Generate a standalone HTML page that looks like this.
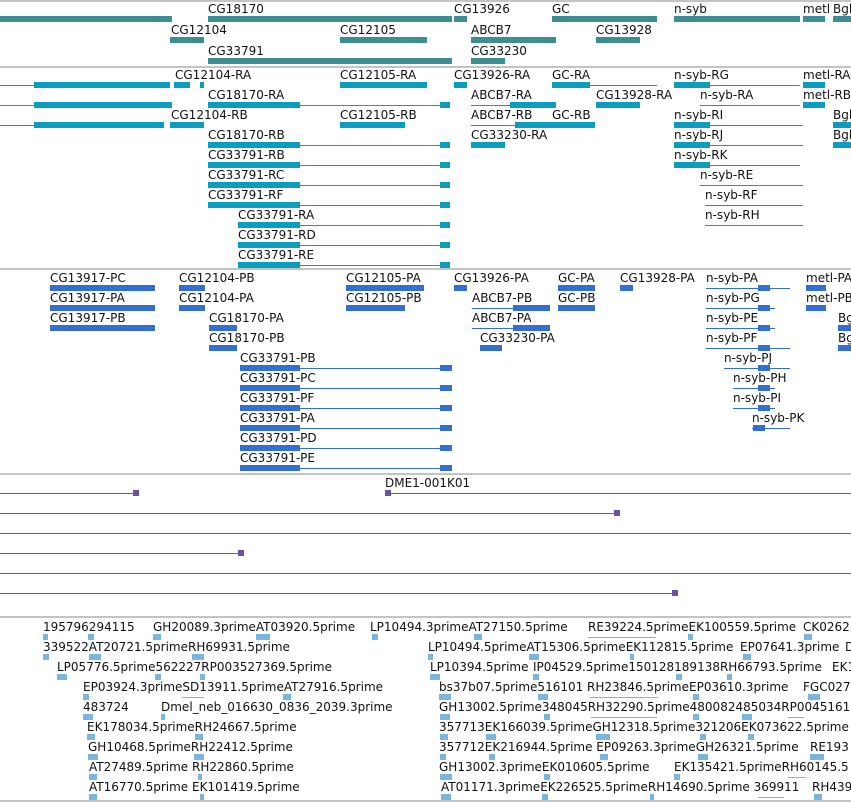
<!DOCTYPE html>
<html><head><meta charset="utf-8"><style>
body{margin:0;width:851px;height:802px;background:#fff;position:relative;overflow:hidden;font-family:"DejaVu Sans","Liberation Sans",sans-serif;font-size:12px;color:#111}
div{position:absolute}
.s{left:0;width:851px;height:2px;background:#c4c4c4}
.t{white-space:nowrap;line-height:14px}
.a{background:#3d8e93;height:6px}
.b{background:#0b9dbf;height:6px}
.bl{background:#0b9dbf;height:1px}
.c{background:#336fd2;height:6px}
.cl{background:#336fd2;height:1px}
.p{background:#6e4fa6;height:1px}
.pb{background:#6e4fa6;height:6px;width:6px}
.e{background:#7ab4e0;height:6px}
.el{background:#7ab4e0;height:1px}
</style></head><body>
<div class="s" style="top:0"></div>
<div class="s" style="top:66px"></div>
<div class="s" style="top:268px"></div>
<div class="s" style="top:473px"></div>
<div class="s" style="top:616px"></div>
<div class="s" style="top:800px"></div>

<!-- track1 -->
<div class="t" style="left:208px;top:2px">CG18170</div>
<div class="t" style="left:454px;top:2px">CG13926</div>
<div class="t" style="left:552px;top:2px">GC</div>
<div class="t" style="left:674px;top:2px">n-syb</div>
<div class="t" style="left:803px;top:2px">metl</div>
<div class="t" style="left:833px;top:2px">Bgb</div>
<div class="a" style="left:0;top:16px;width:172px"></div>
<div class="a" style="left:208px;top:16px;width:244px"></div>
<div class="a" style="left:454px;top:16px;width:13px"></div>
<div class="a" style="left:552px;top:16px;width:105px"></div>
<div class="a" style="left:674px;top:16px;width:126px"></div>
<div class="a" style="left:803px;top:16px;width:22px"></div>
<div class="a" style="left:833px;top:16px;width:18px"></div>
<div class="t" style="left:171px;top:23px">CG12104</div>
<div class="t" style="left:340px;top:23px">CG12105</div>
<div class="t" style="left:471px;top:23px">ABCB7</div>
<div class="t" style="left:596px;top:23px">CG13928</div>
<div class="a" style="left:170px;top:37px;width:34px"></div>
<div class="a" style="left:340px;top:37px;width:87px"></div>
<div class="a" style="left:420px;top:37px;width:7px"></div>
<div class="a" style="left:471px;top:37px;width:85px"></div>
<div class="a" style="left:596px;top:37px;width:44px"></div>
<div class="t" style="left:208px;top:44px">CG33791</div>
<div class="t" style="left:471px;top:44px">CG33230</div>
<div class="a" style="left:208px;top:58px;width:244px"></div>
<div class="a" style="left:471px;top:58px;width:34px"></div>

<!-- track2 -->
<div class="bl" style="left:0;top:85px;width:34px"></div>
<div class="b" style="left:34px;top:82px;width:136px"></div>
<div class="b" style="left:174px;top:82px;width:16px"></div>
<div class="b" style="left:200px;top:82px;width:4px"></div>
<div class="t" style="left:175px;top:68px">CG12104-RA</div>
<div class="t" style="left:340px;top:68px">CG12105-RA</div>
<div class="b" style="left:340px;top:82px;width:87px"></div>
<div class="t" style="left:454px;top:68px">CG13926-RA</div>
<div class="b" style="left:454px;top:82px;width:13px"></div>
<div class="t" style="left:552px;top:68px">GC-RA</div>
<div class="b" style="left:552px;top:82px;width:38px"></div>
<div class="bl" style="left:590px;top:85px;width:67px"></div>
<div class="t" style="left:674px;top:68px">n-syb-RG</div>
<div class="b" style="left:674px;top:82px;width:36px"></div>
<div class="bl" style="left:710px;top:85px;width:90px"></div>
<div class="t" style="left:803px;top:68px">metl-RA</div>
<div class="b" style="left:803px;top:82px;width:22px"></div>

<div class="bl" style="left:0;top:105px;width:34px"></div>
<div class="b" style="left:34px;top:102px;width:138px"></div>
<div class="t" style="left:208px;top:88px">CG18170-RA</div>
<div class="b" style="left:208px;top:102px;width:92px"></div>
<div class="bl" style="left:300px;top:105px;width:140px"></div>
<div class="b" style="left:440px;top:102px;width:10px"></div>
<div class="t" style="left:471px;top:88px">ABCB7-RA</div>
<div class="bl" style="left:471px;top:105px;width:85px"></div>
<div class="b" style="left:510px;top:102px;width:46px"></div>
<div class="t" style="left:596px;top:88px">CG13928-RA</div>
<div class="b" style="left:596px;top:102px;width:44px"></div>
<div class="t" style="left:700px;top:88px">n-syb-RA</div>
<div class="bl" style="left:700px;top:105px;width:100px"></div>
<div class="t" style="left:803px;top:88px">metl-RB</div>
<div class="b" style="left:803px;top:102px;width:22px"></div>

<div class="bl" style="left:0;top:125px;width:34px"></div>
<div class="b" style="left:34px;top:122px;width:130px"></div>
<div class="b" style="left:170px;top:122px;width:34px"></div>
<div class="t" style="left:171px;top:108px">CG12104-RB</div>
<div class="t" style="left:340px;top:108px">CG12105-RB</div>
<div class="b" style="left:340px;top:122px;width:65px"></div>
<div class="t" style="left:471px;top:108px">ABCB7-RB</div>
<div class="t" style="left:552px;top:108px">GC-RB</div>
<div class="bl" style="left:471px;top:125px;width:124px"></div>
<div class="b" style="left:515px;top:122px;width:80px"></div>
<div class="t" style="left:674px;top:108px">n-syb-RI</div>
<div class="b" style="left:674px;top:122px;width:36px"></div>
<div class="bl" style="left:710px;top:125px;width:93px"></div>
<div class="t" style="left:833px;top:108px">Bgb</div>
<div class="b" style="left:833px;top:122px;width:18px"></div>

<div class="t" style="left:208px;top:128px">CG18170-RB</div>
<div class="t" style="left:471px;top:128px">CG33230-RA</div>
<div class="b" style="left:471px;top:142px;width:34px"></div>
<div class="t" style="left:674px;top:128px">n-syb-RJ</div>
<div class="b" style="left:674px;top:142px;width:36px"></div>
<div class="bl" style="left:710px;top:145px;width:93px"></div>
<div class="t" style="left:833px;top:128px">Bgb</div>
<div class="b" style="left:833px;top:142px;width:18px"></div>
<div class="t" style="left:208px;top:148px">CG33791-RB</div>
<div class="t" style="left:674px;top:148px">n-syb-RK</div>
<div class="b" style="left:674px;top:162px;width:36px"></div>
<div class="bl" style="left:710px;top:165px;width:90px"></div>
<div class="t" style="left:208px;top:168px">CG33791-RC</div>
<div class="t" style="left:700px;top:168px">n-syb-RE</div>
<div class="bl" style="left:700px;top:185px;width:103px"></div>
<div class="t" style="left:208px;top:188px">CG33791-RF</div>
<div class="t" style="left:705px;top:188px">n-syb-RF</div>
<div class="bl" style="left:705px;top:205px;width:98px"></div>
<div class="t" style="left:238px;top:208px">CG33791-RA</div>
<div class="t" style="left:705px;top:208px">n-syb-RH</div>
<div class="bl" style="left:705px;top:225px;width:98px"></div>
<div class="t" style="left:238px;top:228px">CG33791-RD</div>
<div class="t" style="left:238px;top:248px">CG33791-RE</div>
<!-- CG rows bars -->
<div class="b" style="left:208px;top:142px;width:92px"></div><div class="bl" style="left:300px;top:145px;width:140px"></div><div class="b" style="left:440px;top:142px;width:10px"></div>
<div class="b" style="left:208px;top:162px;width:92px"></div><div class="bl" style="left:300px;top:165px;width:140px"></div><div class="b" style="left:440px;top:162px;width:10px"></div>
<div class="b" style="left:208px;top:182px;width:92px"></div><div class="bl" style="left:300px;top:185px;width:140px"></div><div class="b" style="left:440px;top:182px;width:10px"></div>
<div class="b" style="left:208px;top:202px;width:92px"></div><div class="bl" style="left:300px;top:205px;width:140px"></div><div class="b" style="left:440px;top:202px;width:10px"></div>
<div class="b" style="left:238px;top:222px;width:62px"></div><div class="bl" style="left:300px;top:225px;width:140px"></div><div class="b" style="left:440px;top:222px;width:10px"></div>
<div class="b" style="left:238px;top:242px;width:62px"></div><div class="bl" style="left:300px;top:245px;width:140px"></div><div class="b" style="left:440px;top:242px;width:10px"></div>
<div class="b" style="left:238px;top:262px;width:62px"></div><div class="bl" style="left:300px;top:265px;width:140px"></div><div class="b" style="left:440px;top:262px;width:10px"></div>

<!-- track3 -->
<div class="t" style="left:50px;top:271px">CG13917-PC</div><div class="c" style="left:50px;top:285px;width:105px"></div>
<div class="t" style="left:50px;top:291px">CG13917-PA</div><div class="c" style="left:50px;top:305px;width:105px"></div>
<div class="t" style="left:50px;top:311px">CG13917-PB</div><div class="c" style="left:50px;top:325px;width:105px"></div>
<div class="t" style="left:179px;top:271px">CG12104-PB</div><div class="c" style="left:179px;top:285px;width:26px"></div>
<div class="t" style="left:179px;top:291px">CG12104-PA</div><div class="c" style="left:179px;top:305px;width:26px"></div>
<div class="t" style="left:209px;top:311px">CG18170-PA</div><div class="c" style="left:209px;top:325px;width:28px"></div>
<div class="t" style="left:209px;top:331px">CG18170-PB</div><div class="c" style="left:209px;top:345px;width:28px"></div>
<div class="t" style="left:346px;top:271px">CG12105-PA</div><div class="c" style="left:346px;top:285px;width:78px"></div>
<div class="t" style="left:346px;top:291px">CG12105-PB</div><div class="c" style="left:346px;top:305px;width:59px"></div>
<div class="t" style="left:454px;top:271px">CG13926-PA</div><div class="c" style="left:454px;top:285px;width:13px"></div>
<div class="t" style="left:472px;top:291px">ABCB7-PB</div><div class="cl" style="left:472px;top:308px;width:78px"></div><div class="c" style="left:513px;top:305px;width:37px"></div>
<div class="t" style="left:472px;top:311px">ABCB7-PA</div><div class="cl" style="left:472px;top:328px;width:78px"></div><div class="c" style="left:513px;top:325px;width:37px"></div>
<div class="t" style="left:480px;top:331px">CG33230-PA</div><div class="c" style="left:480px;top:345px;width:22px"></div>
<div class="t" style="left:558px;top:271px">GC-PA</div><div class="c" style="left:558px;top:285px;width:37px"></div>
<div class="t" style="left:558px;top:291px">GC-PB</div><div class="c" style="left:558px;top:305px;width:37px"></div>
<div class="t" style="left:620px;top:271px">CG13928-PA</div><div class="c" style="left:620px;top:285px;width:13px"></div>
<div class="t" style="left:706px;top:271px">n-syb-PA</div><div class="cl" style="left:706px;top:288px;width:84px"></div><div class="c" style="left:758px;top:285px;width:12px"></div>
<div class="t" style="left:706px;top:291px">n-syb-PG</div><div class="cl" style="left:706px;top:308px;width:69px"></div><div class="c" style="left:758px;top:305px;width:12px"></div>
<div class="t" style="left:706px;top:311px">n-syb-PE</div><div class="cl" style="left:706px;top:328px;width:69px"></div><div class="c" style="left:758px;top:325px;width:12px"></div>
<div class="t" style="left:706px;top:331px">n-syb-PF</div><div class="cl" style="left:706px;top:348px;width:84px"></div><div class="c" style="left:758px;top:345px;width:12px"></div>
<div class="t" style="left:724px;top:351px">n-syb-PJ</div><div class="cl" style="left:724px;top:368px;width:66px"></div><div class="c" style="left:758px;top:365px;width:12px"></div>
<div class="t" style="left:733px;top:371px">n-syb-PH</div><div class="cl" style="left:733px;top:388px;width:42px"></div><div class="c" style="left:758px;top:385px;width:12px"></div>
<div class="t" style="left:733px;top:391px">n-syb-PI</div><div class="cl" style="left:733px;top:408px;width:42px"></div><div class="c" style="left:758px;top:405px;width:12px"></div>
<div class="t" style="left:752px;top:411px">n-syb-PK</div><div class="cl" style="left:752px;top:428px;width:38px"></div><div class="c" style="left:753px;top:425px;width:12px"></div>
<div class="t" style="left:806px;top:271px">metl-PA</div><div class="c" style="left:806px;top:285px;width:20px"></div>
<div class="t" style="left:806px;top:291px">metl-PB</div><div class="c" style="left:806px;top:305px;width:20px"></div>
<div class="t" style="left:838px;top:311px">Bg</div><div class="c" style="left:838px;top:325px;width:13px"></div>
<div class="t" style="left:838px;top:331px">Bg</div><div class="c" style="left:838px;top:345px;width:13px"></div>
<div class="t" style="left:240px;top:351px">CG33791-PB</div><div class="c" style="left:240px;top:365px;width:60px"></div><div class="cl" style="left:300px;top:368px;width:142px"></div><div class="c" style="left:440px;top:365px;width:12px"></div>
<div class="t" style="left:240px;top:371px">CG33791-PC</div><div class="c" style="left:240px;top:385px;width:60px"></div><div class="cl" style="left:300px;top:388px;width:142px"></div><div class="c" style="left:440px;top:385px;width:12px"></div>
<div class="t" style="left:240px;top:391px">CG33791-PF</div><div class="c" style="left:240px;top:405px;width:60px"></div><div class="cl" style="left:300px;top:408px;width:142px"></div><div class="c" style="left:440px;top:405px;width:12px"></div>
<div class="t" style="left:240px;top:411px">CG33791-PA</div><div class="c" style="left:240px;top:425px;width:60px"></div><div class="cl" style="left:300px;top:428px;width:142px"></div><div class="c" style="left:440px;top:425px;width:12px"></div>
<div class="t" style="left:240px;top:431px">CG33791-PD</div><div class="c" style="left:240px;top:445px;width:60px"></div><div class="cl" style="left:300px;top:448px;width:142px"></div><div class="c" style="left:440px;top:445px;width:12px"></div>
<div class="t" style="left:240px;top:451px">CG33791-PE</div><div class="c" style="left:240px;top:465px;width:60px"></div><div class="cl" style="left:300px;top:468px;width:142px"></div><div class="c" style="left:440px;top:465px;width:12px"></div>

<!-- track4 -->
<div class="p" style="left:0;top:493px;width:138px"></div><div class="pb" style="left:133px;top:490px"></div>
<div class="t" style="left:385px;top:476px">DME1-001K01</div>
<div class="p" style="left:385px;top:493px;width:466px"></div><div class="pb" style="left:385px;top:490px"></div>
<div class="p" style="left:0;top:513px;width:620px"></div><div class="pb" style="left:614px;top:510px"></div>
<div class="p" style="left:0;top:533px;width:851px"></div>
<div class="p" style="left:0;top:553px;width:243px"></div><div class="pb" style="left:238px;top:550px"></div>
<div class="p" style="left:0;top:573px;width:851px"></div>
<div class="p" style="left:0;top:593px;width:677px"></div><div class="pb" style="left:672px;top:590px"></div>

<!-- track5 -->
<div class="t" style="left:43px;top:620px">195796294115</div>
<div class="t" style="left:153px;top:620px">GH20089.3primeAT03920.5prime</div>
<div class="t" style="left:370px;top:620px">LP10494.3primeAT27150.5prime</div>
<div class="t" style="left:588px;top:620px">RE39224.5primeEK100559.5prime</div>
<div class="t" style="left:803px;top:620px">CK0262</div>
<div class="t" style="left:43px;top:640px">339522AT20721.5primeRH69931.5prime</div>
<div class="t" style="left:428px;top:640px">LP10494.5primeAT15306.5primeEK112815.5prime</div>
<div class="t" style="left:740px;top:640px">EP07641.3prime</div>
<div class="t" style="left:845px;top:640px">D</div>
<div class="t" style="left:57px;top:660px">LP05776.5prime562227RP003527369.5prime</div>
<div class="t" style="left:430px;top:660px">LP10394.5prime</div>
<div class="t" style="left:533px;top:660px">IP04529.5prime150128189138RH66793.5prime</div>
<div class="t" style="left:832px;top:660px">EK1</div>
<div class="t" style="left:83px;top:680px">EP03924.3primeSD13911.5primeAT27916.5prime</div>
<div class="t" style="left:439px;top:680px">bs37b07.5prime516101 RH23846.5primeEP03610.3prime</div>
<div class="t" style="left:803px;top:680px">FGC027</div>
<div class="t" style="left:83px;top:700px">483724</div>
<div class="t" style="left:161px;top:700px">Dmel_neb_016630_0836_2039.3prime</div>
<div class="t" style="left:439px;top:700px">GH13002.5prime348045RH32290.5prime480082485034RP0045161</div>
<div class="t" style="left:87px;top:720px">EK178034.5primeRH24667.5prime</div>
<div class="t" style="left:439px;top:720px">357713EK166039.5primeGH12318.5prime321206EK073622.5prime</div>
<div class="t" style="left:88px;top:740px">GH10468.5primeRH22412.5prime</div>
<div class="t" style="left:439px;top:740px">357712EK216944.5prime EP09263.3primeGH26321.5prime</div>
<div class="t" style="left:810px;top:740px">RE193</div>
<div class="t" style="left:89px;top:760px">AT27489.5prime RH22860.5prime</div>
<div class="t" style="left:439px;top:760px">GH13002.3primeEK010605.5prime</div>
<div class="t" style="left:674px;top:760px">EK135421.5primeRH60145.5</div>
<div class="t" style="left:89px;top:780px">AT16770.5prime EK101419.5prime</div>
<div class="t" style="left:441px;top:780px">AT01171.3primeEK226525.5primeRH14690.5prime 369911</div>
<div class="t" style="left:812px;top:780px">RH439</div>
<!-- small arrows -->
<div class="e" style="left:43px;top:634px;width:5px"></div><div class="e" style="left:88px;top:634px;width:6px"></div><div class="e" style="left:153px;top:634px;width:8px"></div><div class="e" style="left:256px;top:634px;width:14px"></div><div class="e" style="left:372px;top:634px;width:6px"></div><div class="e" style="left:474px;top:634px;width:8px"></div><div class="el" style="left:588px;top:637px;width:68px"></div><div class="e" style="left:688px;top:634px;width:5px"></div><div class="e" style="left:804px;top:634px;width:8px"></div>
<div class="e" style="left:43px;top:654px;width:6px"></div><div class="e" style="left:89px;top:654px;width:12px"></div><div class="e" style="left:192px;top:654px;width:12px"></div><div class="e" style="left:428px;top:654px;width:5px"></div><div class="e" style="left:529px;top:654px;width:10px"></div><div class="e" style="left:630px;top:654px;width:4px"></div><div class="e" style="left:743px;top:654px;width:8px"></div>
<div class="e" style="left:57px;top:674px;width:10px"></div><div class="e" style="left:155px;top:674px;width:6px"></div><div class="e" style="left:200px;top:674px;width:5px"></div><div class="e" style="left:430px;top:674px;width:10px"></div><div class="e" style="left:533px;top:674px;width:6px"></div><div class="e" style="left:676px;top:674px;width:6px"></div><div class="e" style="left:727px;top:674px;width:5px"></div>
<div class="e" style="left:83px;top:694px;width:6px"></div><div class="el" style="left:182px;top:697px;width:22px"></div><div class="e" style="left:283px;top:694px;width:8px"></div><div class="e" style="left:439px;top:694px;width:12px"></div><div class="e" style="left:538px;top:694px;width:10px"></div><div class="el" style="left:590px;top:697px;width:68px"></div><div class="e" style="left:693px;top:694px;width:6px"></div><div class="e" style="left:808px;top:694px;width:12px"></div>
<div class="e" style="left:83px;top:714px;width:10px"></div><div class="e" style="left:161px;top:714px;width:4px"></div><div class="e" style="left:440px;top:714px;width:10px"></div><div class="e" style="left:544px;top:714px;width:6px"></div><div class="el" style="left:591px;top:717px;width:66px"></div><div class="e" style="left:693px;top:714px;width:6px"></div><div class="e" style="left:742px;top:714px;width:10px"></div><div class="el" style="left:788px;top:717px;width:16px"></div>
<div class="e" style="left:87px;top:734px;width:8px"></div><div class="e" style="left:195px;top:734px;width:8px"></div><div class="e" style="left:440px;top:734px;width:8px"></div><div class="e" style="left:486px;top:734px;width:10px"></div><div class="e" style="left:596px;top:734px;width:14px"></div><div class="e" style="left:700px;top:734px;width:6px"></div><div class="e" style="left:748px;top:734px;width:6px"></div>
<div class="e" style="left:88px;top:754px;width:10px"></div><div class="e" style="left:194px;top:754px;width:10px"></div><div class="e" style="left:440px;top:754px;width:6px"></div><div class="e" style="left:489px;top:754px;width:6px"></div><div class="e" style="left:600px;top:754px;width:8px"></div><div class="e" style="left:698px;top:754px;width:10px"></div><div class="e" style="left:810px;top:754px;width:14px"></div>
<div class="e" style="left:89px;top:774px;width:8px"></div><div class="e" style="left:198px;top:774px;width:4px"></div><div class="e" style="left:440px;top:774px;width:12px"></div><div class="e" style="left:544px;top:774px;width:6px"></div><div class="e" style="left:674px;top:774px;width:6px"></div><div class="el" style="left:788px;top:777px;width:18px"></div>
<div class="e" style="left:89px;top:794px;width:8px"></div><div class="e" style="left:200px;top:794px;width:4px"></div><div class="e" style="left:441px;top:794px;width:10px"></div><div class="e" style="left:542px;top:794px;width:6px"></div><div class="e" style="left:650px;top:794px;width:4px"></div><div class="el" style="left:758px;top:797px;width:26px"></div><div class="e" style="left:814px;top:794px;width:8px"></div>
</body></html>
